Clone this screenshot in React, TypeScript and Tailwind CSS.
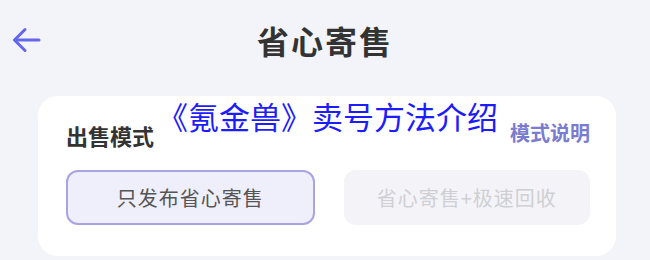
import React from "react";

const font = { fontFamily: '"Noto Sans CJK SC", "Noto Sans", sans-serif' };

export default function App() {
    return (
        <main className="relative w-[650px] h-[260px] overflow-hidden bg-[#f3f4f9]" style={font}>
            {/* header */}
            <div className="relative flex items-center justify-center h-[80px]">
                <button className="absolute left-[10px] top-[24px] text-[#6466ee]" aria-label="back">
                    <svg width="32" height="32" viewBox="0 0 32 32" fill="none" stroke="currentColor" strokeWidth="3" strokeLinecap="round" strokeLinejoin="round">
                        <path d="M29 16H5" />
                        <path d="M15 5.5L4.5 16L15 26.5" />
                    </svg>
                </button>
                <h1 className="text-[32px] font-bold text-[#333] tracking-[2px] leading-none">省心寄售</h1>
            </div>

            {/* card */}
            <div className="ml-[38px] mt-[16px] h-[160px] w-[578px] rounded-[20px] bg-white pl-[28px] pr-[26px] pt-[23px]">
                <div className="flex items-center justify-between">
                    <span className="text-[22px] font-bold text-[#333] leading-none mt-[5px]">出售模式</span>
                    <span className="text-[20px] font-bold text-[#7b7bd0] leading-none">模式说明</span>
                </div>
                <div className="mt-[24px] flex gap-[29px]">
                    <div className="flex h-[55px] w-[249px] items-center justify-center rounded-[12px] border-2 border-[#a8a4e2] bg-[#efeefb] text-[20px] tracking-[1px] text-[#555]">
                        只发布省心寄售
                    </div>
                    <div className="flex h-[55px] w-[247px] items-center justify-center rounded-[12px] bg-[#f4f4f8] text-[20px] tracking-[1px] text-[#cfcfd4]">
                        省心寄售+极速回收
                    </div>
                </div>
            </div>

            {/* overlay caption */}
            <div className="absolute left-[157px] top-[96px] text-[31px] leading-[40px] text-[#1d1dfc] whitespace-nowrap">
                《氪金兽》卖号方法介绍
            </div>
        </main>
    );
}
